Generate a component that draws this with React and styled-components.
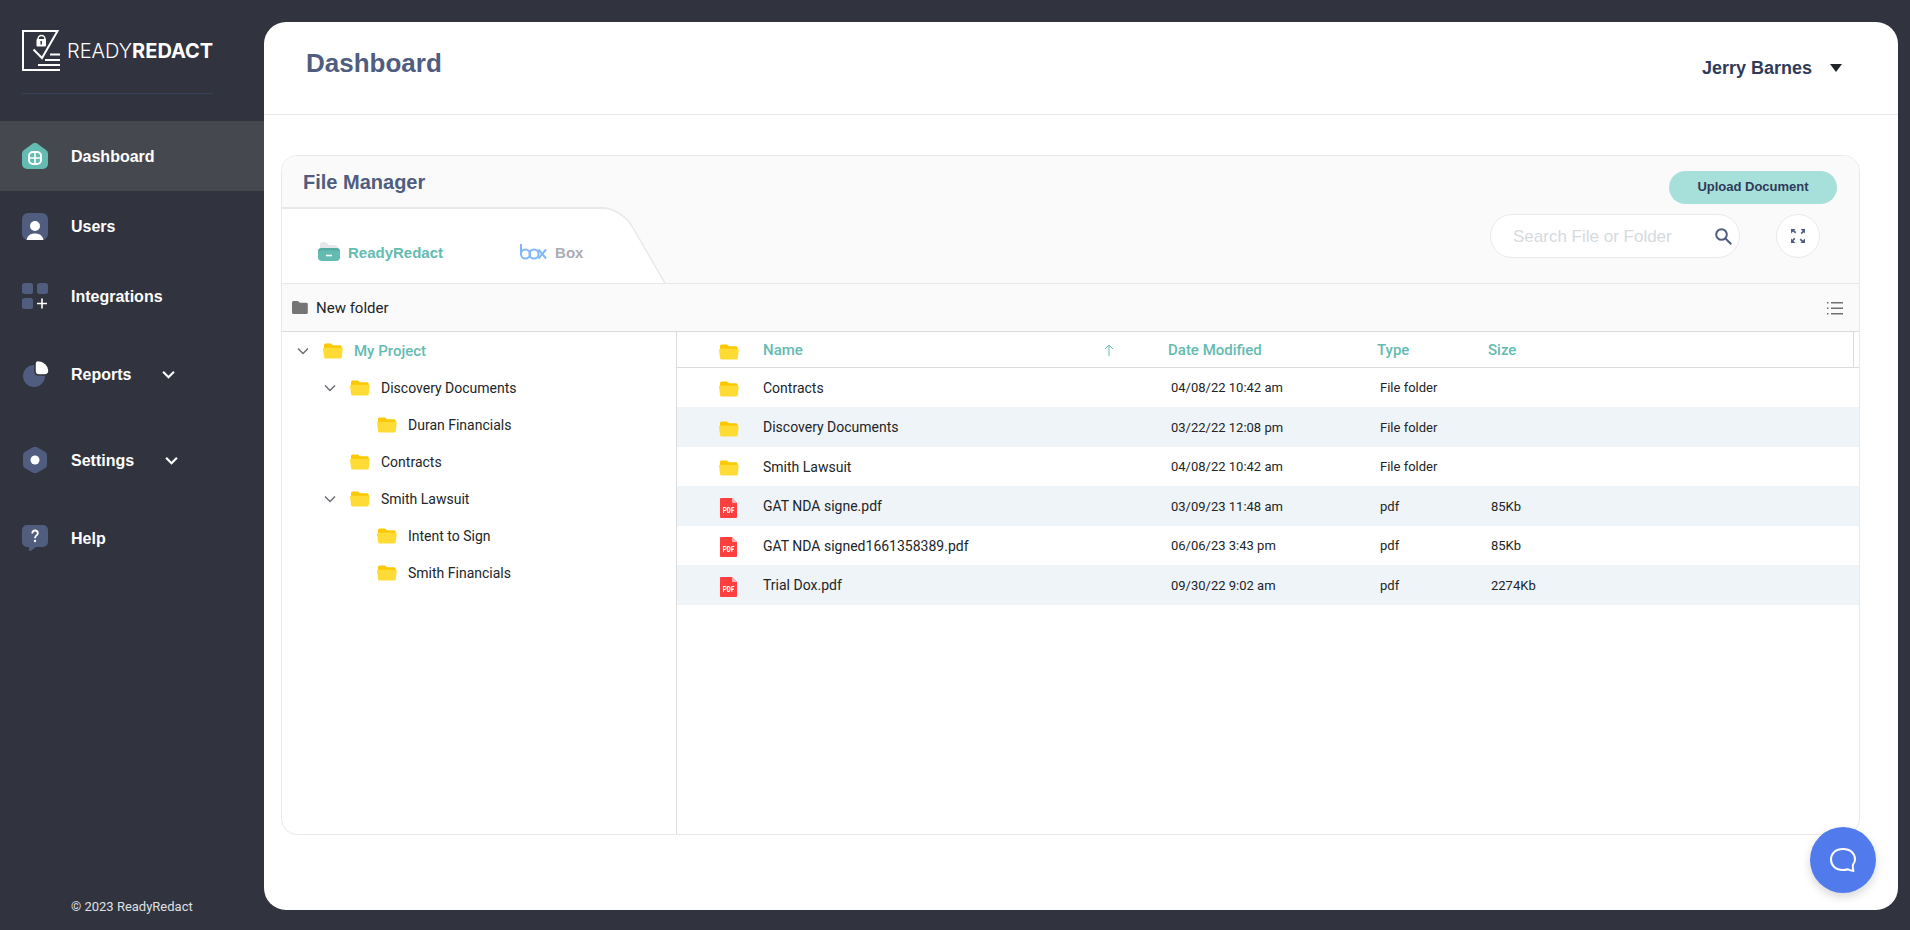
import React, { useState } from 'react'
import styled, { createGlobalStyle, css, ThemeProvider } from 'styled-components'

const theme = {
  arial: '"Liberation Sans", Arial, sans-serif',
  roboto: 'Roboto, sans-serif',
  colors: {
    night: '#31333e',
    nightActive: '#46484f',
    slate: '#505d7f',
    navy: '#2f3b59',
    teal: '#64bbb1',
    mint: '#a7e0da',
    text: '#212529',
    muted: '#a9adb6',
    line: '#e9e9e9',
    lineDark: '#dcdcdc',
    panel: '#fafafa',
    stripe: '#eff4f8',
    blue: '#517bec',
  },
}

const GlobalStyle = createGlobalStyle`
  * {
    box-sizing: border-box;
  }

  body {
    margin: 0;
    background: #31333e;
  }

  button {
    font: inherit;
    color: inherit;
    background: none;
    border: 0;
    padding: 0;
    cursor: pointer;
  }

  svg {
    display: block;
    flex: none;
  }
`

const ScPage = styled.div`
  display: flex;
  min-height: 100vh;
  background: ${p => p.theme.colors.night};
  color: ${p => p.theme.colors.text};
  font-family: ${p => p.theme.roboto};
  font-size: 14px;
`

const ScSidebar = styled.aside`
  display: flex;
  flex-direction: column;
  flex: none;
  width: 264px;
  padding: 30px 0 14px;
  color: white;
`

const ScLogo = styled.a`
  display: flex;
  align-items: center;
  gap: 6px;
  height: 41px;
  margin: 0 22px;
  color: white;
  text-decoration: none;
  font-family: Inter, sans-serif;
  font-size: 20px;
  font-weight: 300;
  line-height: 24px;

  b {
    font-weight: 700;
  }
`

const ScDivider = styled.hr`
  width: 191px;
  margin: 22px 22px 27px;
  border: 0;
  border-top: 1px solid #36415a;
`

const navItem = css`
  display: flex;
  align-items: center;
  gap: 23px;
  width: 100%;
  padding: 0 22px;
  color: white;
  font: 700 16px ${p => p.theme.arial};
  text-decoration: none;
`

const ScNavLink = styled.a`
  ${navItem}
  height: 70px;
  background: ${p => (p.$active ? p.theme.colors.nightActive : 'transparent')};
`

const ScNavButton = styled.button`
  ${navItem}
  height: 86px;

  & svg:last-child {
    margin-left: 8px;
  }
`

const ScNavLabel = styled.span`
  padding-top: 2px;
`

const ScCopyright = styled.footer`
  margin-top: auto;
  padding-left: 71px;
  color: #dfe1e6;
  font-size: 13px;
  line-height: 18px;
`

const ScMain = styled.main`
  display: flex;
  flex-direction: column;
  flex: 1;
  min-width: 0;
  margin: 22px 12px 20px 0;
  background: white;
  border-radius: 22px;
`

const ScHeader = styled.header`
  display: flex;
  align-items: center;
  justify-content: space-between;
  height: 93px;
  padding: 0 56px 8px 42px;
  border-bottom: 1px solid ${p => p.theme.colors.line};
  font-family: ${p => p.theme.arial};
`

const ScTitle = styled.h1`
  margin: 0;
  padding-bottom: 2px;
  color: ${p => p.theme.colors.slate};
  font-size: 26px;
`

const ScUser = styled.button`
  display: flex;
  align-items: center;
  gap: 18px;
  padding-top: 8px;
  color: ${p => p.theme.colors.navy};
  font: 700 18px ${p => p.theme.arial};
`

const ScContent = styled.div`
  display: flex;
  flex: 1;
  padding: 40px 38px 75px 17px;
`

const ScCard = styled.section`
  display: flex;
  flex-direction: column;
  flex: 1;
  min-width: 0;
  overflow: hidden;
  border: 1px solid ${p => p.theme.colors.line};
  border-radius: 16px;
`

const ScCardHead = styled.div`
  display: flex;
  justify-content: space-between;
  background: ${p => p.theme.colors.panel};
  border-bottom: 1px solid ${p => p.theme.colors.line};
`

const ScCardTitle = styled.h2`
  height: 51px;
  margin: 0;
  padding-left: 21px;
  color: ${p => p.theme.colors.slate};
  font: 700 20px ${p => p.theme.arial};
  line-height: 53px;
`

const ScTabs = styled.div`
  position: relative;
  display: flex;
  align-items: center;
  gap: 77px;
  width: 384px;
  height: 76px;
  padding: 14px 0 0 36px;
  overflow: hidden;

  /* slanted right edge of the tab strip */
  &::before {
    content: '';
    position: absolute;
    inset: 0 0 0 -60px;
    background: white;
    border: solid ${p => p.theme.colors.line};
    border-width: 2px 2px 0 0;
    border-top-right-radius: 20px;
    transform: skewX(30deg);
    transform-origin: bottom;
  }
`

const ScTab = styled.button`
  position: relative;
  display: flex;
  align-items: center;
  gap: 8px;
  color: ${p => (p.$active ? p.theme.colors.teal : p.theme.colors.muted)};
  font: 700 15px ${p => p.theme.arial};
`

const ScControls = styled.div`
  display: flex;
  flex-direction: column;
  align-items: flex-end;
  gap: 10px;
  padding: 15px 22px 0 0;
`

const ScUpload = styled.button`
  width: 168px;
  height: 33px;
  padding-bottom: 2px;
  color: ${p => p.theme.colors.navy};
  background: ${p => p.theme.colors.mint};
  border-radius: 17px;
  font: 700 13px ${p => p.theme.arial};
`

const ScSearchRow = styled.div`
  display: flex;
  gap: 36px;
  padding-right: 17px;
`

const ScSearch = styled.form`
  display: flex;
  align-items: center;
  width: 250px;
  height: 44px;
  padding: 0 7px 0 22px;
  background: white;
  border: 1px solid ${p => p.theme.colors.line};
  border-radius: 22px;

  input {
    flex: 1;
    min-width: 0;
    padding: 2px 0 0;
    border: 0;
    outline: 0;
    background: none;
    color: ${p => p.theme.colors.text};
    font: 17px ${p => p.theme.arial};
  }

  input::placeholder {
    color: #d6dae0;
    opacity: 1;
  }
`

const ScRound = styled.button`
  display: flex;
  align-items: center;
  justify-content: center;
  width: 44px;
  height: 44px;
  background: white;
  border: 1px solid ${p => p.theme.colors.line};
  border-radius: 22px;
`

const ScToolbar = styled.div`
  display: flex;
  align-items: center;
  justify-content: space-between;
  height: 48px;
  padding: 0 16px 0 10px;
  background: ${p => p.theme.colors.panel};
  border-bottom: 1px solid ${p => p.theme.colors.lineDark};
`

const ScNewFolder = styled.button`
  display: flex;
  align-items: center;
  gap: 8px;
  font-size: 15px;
`

const ScBody = styled.div`
  display: flex;
  flex: 1;
`

const ScTree = styled.ul`
  flex: none;
  width: 395px;
  margin: 0;
  padding: 0;
  list-style: none;
  border-right: 1px solid ${p => p.theme.colors.lineDark};
`

const ScTreeItem = styled.li`
  display: flex;
  align-items: center;
  height: 37px;
  padding-left: ${p => 15 + p.$level * 27}px;
  font-size: ${p => (p.$root ? 15 : 14)}px;
  font-weight: ${p => (p.$root ? 500 : 400)};
  color: ${p => (p.$root ? p.theme.colors.teal : p.theme.colors.text)};
`

const ScToggle = styled.span`
  width: 26px;
`

const ScTreeButton = styled.button`
  display: flex;
  align-items: center;
  gap: 11px;
`

const ScTable = styled.table`
  flex: 1;
  align-self: flex-start;
  min-width: 0;
  table-layout: fixed;
  border-collapse: collapse;
  text-align: left;
`

const ScHeadRow = styled.tr`
  height: 36px;
  box-shadow: inset 0 -1px ${p => p.theme.colors.lineDark};
`

const ScTh = styled.th`
  width: ${p => (p.$width ? `${p.$width}px` : 'auto')};
  padding: 0;
  color: ${p => p.theme.colors.teal};
  font-size: 15px;
  font-weight: 500;
`

const ScSort = styled.button`
  display: flex;
  align-items: center;
  justify-content: space-between;
  width: 100%;
  padding-right: 54px;
`

const ScLastHead = styled.div`
  height: 36px;
  margin-right: 5px;
  border-right: 1px solid ${p => p.theme.colors.lineDark};
  line-height: 36px;
`

const ScRow = styled.tr`
  height: 40px;

  &:nth-child(odd) {
    height: 39px;
  }

  &:nth-child(even) {
    background: ${p => p.theme.colors.stripe};
  }
`

const ScTd = styled.td`
  padding: 0 0 0 3px;
  font-size: 13px;
`

const ScNameTd = styled(ScTd)`
  padding: 0;
  font-size: 14px;
`

const ScIconTd = styled(ScTd)`
  padding: 3px 0 0 42px;
`

const ScChat = styled.button`
  position: fixed;
  right: 34px;
  bottom: 37px;
  display: flex;
  align-items: center;
  justify-content: center;
  width: 66px;
  height: 66px;
  background: ${p => p.theme.colors.blue};
  border-radius: 33px;
  box-shadow: 0 4px 10px rgba(0, 0, 0, 0.16);
`

const LogoMark = () => (
  <svg width="39" height="41" viewBox="0 0 39 41" fill="none" stroke="white">
    <path d="M38 40H1V1h34.500L20 28l-8.500-8.500" strokeWidth="2" />
    <path d="M28 24.500h10M23 30h15M16 35h22" strokeWidth="2" />
    <path d="M16 10V9a3.500 3.500 0 0 1 7 0v2" strokeWidth="1.500" />
    <rect x="14.500" y="9" width="9.500" height="7.500" rx="1" fill="white" stroke="none" />
    <path d="M19.200 11v3.500" stroke="#31333e" strokeWidth="1.500" />
  </svg>
)

const HomeIcon = () => (
  <svg width="26" height="26" viewBox="0 0 26 26">
    <path
      d="M10.500.800a4 4 0 0 1 5 0l8.500 6.200a4 4 0 0 1 2 3.500V21a5 5 0 0 1-5 5H5a5 5 0 0 1-5-5V10.500A4 4 0 0 1 2 7z"
      fill="#64bbb1"
    />
    <g fill="none" stroke="white" strokeWidth="2">
      <rect x="7" y="9" width="12" height="12" rx="4" />
      <path d="M13 9v12M7 15h12" strokeWidth="1.600" />
    </g>
  </svg>
)

const UsersIcon = () => (
  <svg width="26" height="27" viewBox="0 0 26 27">
    <rect width="26" height="27" rx="6" fill="#505d7f" />
    <circle cx="13" cy="13" r="5" fill="white" />
    <path d="M4.500 27c1-4.500 4-6.500 8.500-6.500s7.500 2 8.500 6.500z" fill="white" />
  </svg>
)

const IntegrationsIcon = () => (
  <svg width="26" height="26" viewBox="0 0 26 26" fill="#505d7f">
    <rect width="11" height="11" rx="2.500" />
    <rect x="15" width="11" height="11" rx="2.500" />
    <rect y="15" width="11" height="11" rx="2.500" />
    <path d="M20 15.500v10M15 20.500h10" stroke="white" strokeWidth="1.600" />
  </svg>
)

const ReportsIcon = () => (
  <svg width="26" height="26" viewBox="0 0 26 26" overflow="visible">
    <circle cx="12" cy="15" r="11" fill="#505d7f" />
    <path
      d="M16-.500c6 0 11 5 11 10 0 3-1.500 4.500-4.500 4.500H17c-2.500 0-4-1.500-4-4V2.500c0-2 1-3 3-3z"
      fill="white"
      stroke="#31333e"
      strokeWidth="1.500"
    />
  </svg>
)

const SettingsIcon = () => (
  <svg width="26" height="28" viewBox="0 0 26 28">
    <path
      d="M10.500 1.500a5 5 0 0 1 5 0l7.500 4.300a4 4 0 0 1 2 3.500v9.400a4 4 0 0 1-2 3.500l-7.500 4.300a5 5 0 0 1-5 0L3 22.200a4 4 0 0 1-2-3.500V9.300a4 4 0 0 1 2-3.500z"
      fill="#505d7f"
    />
    <circle cx="13" cy="14" r="4.500" fill="white" />
  </svg>
)

const HelpIcon = () => (
  <svg width="26" height="26" viewBox="0 0 26 26">
    <path
      d="M5 0h16a5 5 0 0 1 5 5v12a5 5 0 0 1-5 5h-7l-5 3.700c-1.200.800-2 .300-2-1V22H5a5 5 0 0 1-5-5V5a5 5 0 0 1 5-5z"
      fill="#505d7f"
    />
    <path
      d="M10.300 8.500c0-2 1-3 2.700-3s2.800 1 2.800 2.700c0 2.200-2.800 2.300-2.800 5"
      fill="none"
      stroke="white"
      strokeWidth="1.800"
    />
    <circle cx="13" cy="16" r="1.200" fill="white" />
  </svg>
)

const Chevron = ({ size = 12, color = 'white', weight = 2 }) => (
  <svg width={size} height={size} viewBox="0 0 12 12" fill="none">
    <path d="M1 3.500l5 5 5-5" stroke={color} strokeWidth={weight} />
  </svg>
)

const FolderIcon = () => (
  <svg width="20" height="16" viewBox="0 0 20 16">
    <path d="M1 2a1.500 1.500 0 0 1 1.500-1.500H8l2 1.800h7A1.800 1.800 0 0 1 18.800 4v4H1z" fill="#fcc800" />
    <path
      d="M0 6a1.200 1.200 0 0 1 1.200-1.300h17.300A1.200 1.200 0 0 1 19.700 6l-.900 8.200a1.500 1.500 0 0 1-1.500 1.300H2.600a1.500 1.500 0 0 1-1.500-1.300z"
      fill="#ffdc35"
    />
  </svg>
)

const PdfIcon = () => (
  <svg width="20" height="20" viewBox="0 0 20 20">
    <path d="M2 0h11l5 5v14a1 1 0 0 1-1 1H2a1 1 0 0 1-1-1V1a1 1 0 0 1 1-1z" fill="#ff3e3e" />
    <path d="M13 0l5 5h-4a1 1 0 0 1-1-1z" fill="#ffb5b5" />
    <g fill="none" stroke="white" strokeWidth="1.100">
      <path d="M4.500 15V9.500h1.300a1.400 1.400 0 0 1 0 3H4.500" />
      <path d="M8.600 9.500v5h.800c1.200 0 1.600-.800 1.600-2.500s-.400-2.500-1.600-2.500z" />
      <path d="M12.800 15V9.500h2.400M12.800 12.200H15" />
    </g>
  </svg>
)

const DriveIcon = () => (
  <svg width="22" height="20" viewBox="0 0 22 20">
    <path d="M2 3a3 3 0 0 1 3-3h2c2 0 2.500 3 5 3h4a4 4 0 0 1 4 4v3H2z" fill="#e6e7ea" />
    <rect y="6" width="22" height="13" rx="4" fill="#64bbb1" />
    <path d="M0 10c0-2.500 1-4 4-4h14c3 0 4 1.500 4 4-1-1-2-1.500-4-1.500H4c-2 0-3 .500-4 1.500z" fill="#56aba1" />
    <path d="M8 13.500h6" stroke="white" strokeWidth="1.600" />
  </svg>
)

const BoxIcon = () => (
  <svg width="27" height="16" viewBox="0 0 27 16" fill="none" stroke="#80b7fa" strokeWidth="2">
    <path d="M1 0v10" />
    <circle cx="5.500" cy="10" r="4.500" />
    <circle cx="14" cy="10" r="4.500" />
    <path d="M18.500 5.500l7.500 9M26 5.500l-7.500 9" />
  </svg>
)

const SearchIcon = () => (
  <svg width="17" height="17" viewBox="0 0 17 17" fill="none" stroke="#505d7f" strokeWidth="2">
    <circle cx="6.500" cy="6.500" r="5.300" />
    <path d="M10.500 10.500l5.700 5.700" />
  </svg>
)

const ExpandIcon = () => (
  <svg width="14" height="14" viewBox="0 0 14 14" fill="#505d7f">
    <path d="M0 0h4.500L3.300 1.200l2 2-1.200 1.200-2-2L0 4.500z" />
    <path d="M14 0v4.500l-1.200-1.200-2 2-1.200-1.200 2-2L9.500 0z" />
    <path d="M0 14V9.500l1.200 1.200 2-2 1.200 1.200-2 2L4.500 14z" />
    <path d="M14 14H9.500l1.200-1.200-2-2 1.200-1.200 2 2L14 9.500z" />
  </svg>
)

const NewFolderIcon = () => (
  <svg width="16" height="13" viewBox="0 0 16 13" fill="#757575">
    <path d="M1.500 0H6l1.800 1.700h6.500A1.500 1.500 0 0 1 15.800 3v8.500a1.500 1.500 0 0 1-1.500 1.500H1.500A1.500 1.500 0 0 1 0 11.500v-10A1.500 1.500 0 0 1 1.500 0z" />
  </svg>
)

const ListIcon = () => (
  <svg width="16" height="14" viewBox="0 0 16 14" fill="#707070">
    <path d="M0 1h1.500v1.400H0zM4 1h12v1.400H4zM0 6.500h1.500v1.400H0zM4 6.500h12v1.400H4zM0 12h1.500v1.400H0zM4 12h12v1.400H4z" />
  </svg>
)

const SortIcon = () => (
  <svg width="10" height="12" viewBox="0 0 10 12" fill="none" stroke="#64bbb1">
    <path d="M5 12V1M1 5l4-4 4 4" />
  </svg>
)

const ChatIcon = () => (
  <svg width="26" height="24" viewBox="0 0 26 24" fill="none" stroke="white" strokeWidth="2">
    <path
      d="M23 16.500c1.300-1.500 2-3.200 2-5C25 5.500 20.500 1 13 1S1 5.500 1 11.500 5.500 22 13 22c1.700 0 3.200-.300 4.500-.800 1.800.900 3.600 1.600 6 1.800-.600-1.800-.800-4.400-.500-6.500z"
      strokeLinejoin="round"
    />
  </svg>
)

const tree = [
  { name: 'My Project', level: 0, open: true },
  { name: 'Discovery Documents', level: 1, open: true },
  { name: 'Duran Financials', level: 2 },
  { name: 'Contracts', level: 1 },
  { name: 'Smith Lawsuit', level: 1, open: true },
  { name: 'Intent to Sign', level: 2 },
  { name: 'Smith Financials', level: 2 },
]

const files = [
  { name: 'Contracts', date: '04/08/22 10:42 am', type: 'File folder' },
  { name: 'Discovery Documents', date: '03/22/22 12:08 pm', type: 'File folder' },
  { name: 'Smith Lawsuit', date: '04/08/22 10:42 am', type: 'File folder' },
  { name: 'GAT NDA signe.pdf', date: '03/09/23 11:48 am', type: 'pdf', size: '85Kb' },
  { name: 'GAT NDA signed1661358389.pdf', date: '06/06/23 3:43 pm', type: 'pdf', size: '85Kb' },
  { name: 'Trial Dox.pdf', date: '09/30/22 9:02 am', type: 'pdf', size: '2274Kb' },
]

const Sidebar = () => (
  <ScSidebar>
    <ScLogo href="#">
      <LogoMark />
      <span>
        READY<b>REDACT</b>
      </span>
    </ScLogo>
    <ScDivider />
    <nav>
      <ScNavLink href="#dashboard" $active>
        <HomeIcon />
        <ScNavLabel>Dashboard</ScNavLabel>
      </ScNavLink>
      <ScNavLink href="#users">
        <UsersIcon />
        <ScNavLabel>Users</ScNavLabel>
      </ScNavLink>
      <ScNavLink href="#integrations">
        <IntegrationsIcon />
        <ScNavLabel>Integrations</ScNavLabel>
      </ScNavLink>
      <ScNavButton type="button">
        <ReportsIcon />
        <ScNavLabel>Reports</ScNavLabel>
        <Chevron size={13} />
      </ScNavButton>
      <ScNavButton type="button">
        <SettingsIcon />
        <ScNavLabel>Settings</ScNavLabel>
        <Chevron size={13} />
      </ScNavButton>
      <ScNavLink href="#help">
        <HelpIcon />
        <ScNavLabel>Help</ScNavLabel>
      </ScNavLink>
    </nav>
    <ScCopyright>© 2023 ReadyRedact</ScCopyright>
  </ScSidebar>
)

const FileTree = () => (
  <ScTree>
    {tree.map(node => (
      <ScTreeItem key={node.name} $level={node.level} $root={node.level === 0}>
        <ScToggle>{node.open && <Chevron color="#6b6f75" weight={1.5} />}</ScToggle>
        <ScTreeButton type="button">
          <FolderIcon />
          {node.name}
        </ScTreeButton>
      </ScTreeItem>
    ))}
  </ScTree>
)

const FileTable = () => (
  <ScTable>
    <thead>
      <ScHeadRow>
        <ScIconTd as="th" width="86" aria-label="Kind">
          <FolderIcon />
        </ScIconTd>
        <ScTh $width={405}>
          <ScSort type="button">
            Name
            <SortIcon />
          </ScSort>
        </ScTh>
        <ScTh $width={209}>Date Modified</ScTh>
        <ScTh $width={111}>Type</ScTh>
        <ScTh>
          <ScLastHead>Size</ScLastHead>
        </ScTh>
      </ScHeadRow>
    </thead>
    <tbody>
      {files.map(file => (
        <ScRow key={file.name}>
          <ScIconTd>{file.type === 'pdf' ? <PdfIcon /> : <FolderIcon />}</ScIconTd>
          <ScNameTd>{file.name}</ScNameTd>
          <ScTd>{file.date}</ScTd>
          <ScTd>{file.type}</ScTd>
          <ScTd>{file.size}</ScTd>
        </ScRow>
      ))}
    </tbody>
  </ScTable>
)

const App = () => {
  const [query, setQuery] = useState('')

  return (
    <ThemeProvider theme={theme}>
      <GlobalStyle />
      <ScPage>
        <Sidebar />
        <ScMain>
          <ScHeader>
            <ScTitle>Dashboard</ScTitle>
            <ScUser type="button">
              Jerry Barnes
              <svg width="12" height="8" viewBox="0 0 12 8">
                <path d="M0 0h12L6 8z" fill="#212529" />
              </svg>
            </ScUser>
          </ScHeader>
          <ScContent>
            <ScCard>
              <ScCardHead>
                <div>
                  <ScCardTitle>File Manager</ScCardTitle>
                  <ScTabs>
                    <ScTab type="button" $active>
                      <DriveIcon />
                      ReadyRedact
                    </ScTab>
                    <ScTab type="button">
                      <BoxIcon />
                      Box
                    </ScTab>
                  </ScTabs>
                </div>
                <ScControls>
                  <ScUpload type="button">Upload Document</ScUpload>
                  <ScSearchRow>
                    <ScSearch onSubmit={e => e.preventDefault()}>
                      <input
                        aria-label="Search File or Folder"
                        placeholder="Search File or Folder"
                        value={query}
                        onChange={e => setQuery(e.target.value)}
                      />
                      <button type="submit" aria-label="Search">
                        <SearchIcon />
                      </button>
                    </ScSearch>
                    <ScRound type="button" aria-label="Full screen">
                      <ExpandIcon />
                    </ScRound>
                  </ScSearchRow>
                </ScControls>
              </ScCardHead>
              <ScToolbar>
                <ScNewFolder type="button">
                  <NewFolderIcon />
                  New folder
                </ScNewFolder>
                <button type="button" aria-label="List view">
                  <ListIcon />
                </button>
              </ScToolbar>
              <ScBody>
                <FileTree />
                <FileTable />
              </ScBody>
            </ScCard>
          </ScContent>
        </ScMain>
        <ScChat type="button" aria-label="Open chat">
          <ChatIcon />
        </ScChat>
      </ScPage>
    </ThemeProvider>
  )
}

export default App
